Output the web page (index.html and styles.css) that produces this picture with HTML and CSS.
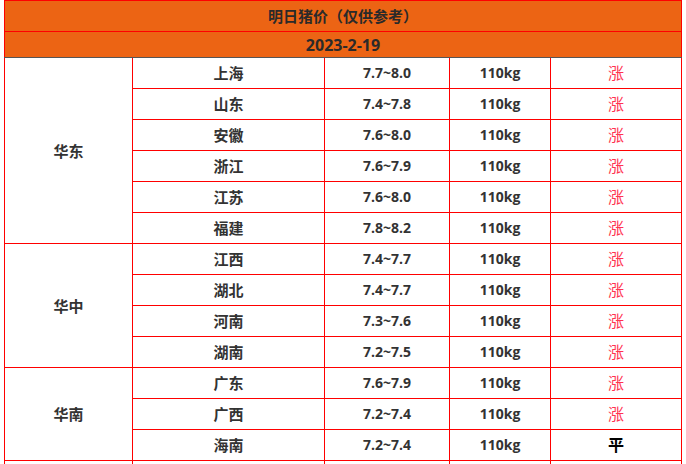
FILE: index.html
```html
<!DOCTYPE html>
<html lang="zh">
<head>
<meta charset="utf-8">
<title>明日猪价</title>
<link rel="stylesheet" href="styles.css">
</head>
<body>
<table class="price-table">
  <colgroup>
    <col class="c-region"><col class="c-prov"><col class="c-price"><col class="c-weight"><col class="c-trend">
  </colgroup>
  <thead>
    <tr class="title-row"><th colspan="5">明日猪价（仅供参考）</th></tr>
    <tr class="date-row"><th colspan="5">2023-2-19</th></tr>
  </thead>
  <tbody>
    <tr><td rowspan="6" class="region">华东</td><td>上海</td><td class="num">7.7~8.0</td><td class="num">110kg</td><td class="up">涨</td></tr>
    <tr><td>山东</td><td class="num">7.4~7.8</td><td class="num">110kg</td><td class="up">涨</td></tr>
    <tr><td>安徽</td><td class="num">7.6~8.0</td><td class="num">110kg</td><td class="up">涨</td></tr>
    <tr><td>浙江</td><td class="num">7.6~7.9</td><td class="num">110kg</td><td class="up">涨</td></tr>
    <tr><td>江苏</td><td class="num">7.6~8.0</td><td class="num">110kg</td><td class="up">涨</td></tr>
    <tr><td>福建</td><td class="num">7.8~8.2</td><td class="num">110kg</td><td class="up">涨</td></tr>
    <tr><td rowspan="4" class="region">华中</td><td>江西</td><td class="num">7.4~7.7</td><td class="num">110kg</td><td class="up">涨</td></tr>
    <tr><td>湖北</td><td class="num">7.4~7.7</td><td class="num">110kg</td><td class="up">涨</td></tr>
    <tr><td>河南</td><td class="num">7.3~7.6</td><td class="num">110kg</td><td class="up">涨</td></tr>
    <tr><td>湖南</td><td class="num">7.2~7.5</td><td class="num">110kg</td><td class="up">涨</td></tr>
    <tr><td rowspan="3" class="region">华南</td><td>广东</td><td class="num">7.6~7.9</td><td class="num">110kg</td><td class="up">涨</td></tr>
    <tr><td>广西</td><td class="num">7.2~7.4</td><td class="num">110kg</td><td class="up">涨</td></tr>
    <tr><td>海南</td><td class="num">7.2~7.4</td><td class="num">110kg</td><td class="flat">平</td></tr>
    <tr class="tail-row"><td></td><td></td><td></td><td></td><td></td></tr>
  </tbody>
</table>
</body>
</html>
```
FILE: styles.css
```css
html, body {
  margin: 0;
  padding: 0;
  background: #ffffff;
}

body {
  padding-left: 4px;
  font-family: "Open Sans", "Noto Sans CJK SC", sans-serif;
  color: #333333;
}

.price-table {
  border-collapse: collapse;
  table-layout: fixed;
  width: 677px;
  font-weight: 700;
  font-size: 14px;
}

.c-region { width: 128px; }
.c-prov { width: 192px; }
.c-price { width: 125px; }
.c-weight { width: 101px; }
.c-trend { width: 131px; }

.price-table th,
.price-table td {
  border: 1px solid #ff0000;
  padding: 0;
  text-align: center;
  vertical-align: middle;
  line-height: 20px;
}

.title-row th {
  background: #ec6414;
  height: 30px;
  font-size: 15px;
  color: #2a2a2a;
}

.date-row th {
  background: #ec6414;
  height: 25px;
  font-size: 16px;
  color: #2a2a2a;
  border-bottom: 1px solid #555555;
}

.price-table td {
  height: 30px;
  font-size: 15px;
}

.price-table td.num {
  font-size: 14px;
}

.price-table td.up {
  color: #ff3350;
  font-weight: 400;
  font-size: 16px;
}

.price-table td.flat {
  color: #000000;
  font-size: 16px;
}
```
